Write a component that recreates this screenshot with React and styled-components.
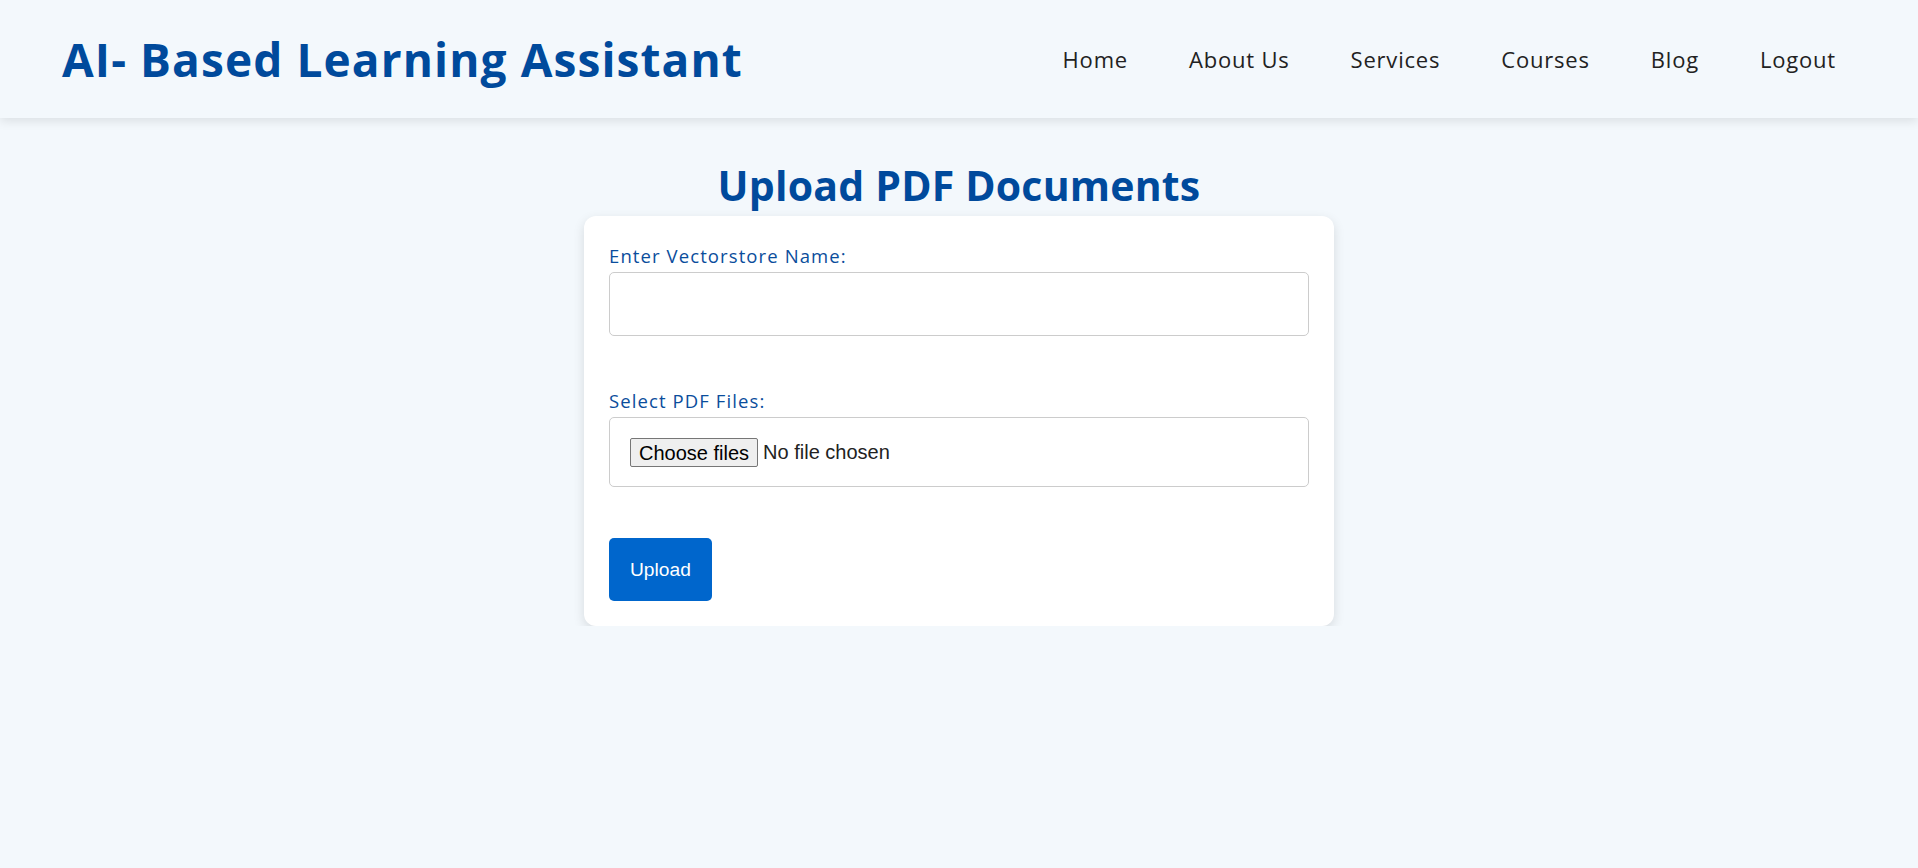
import React, { useState } from 'react'
import styled, { createGlobalStyle } from 'styled-components'

const GlobalStyle = createGlobalStyle`
  * {
    box-sizing: border-box;
  }
  body {
    margin: 0;
    background: #f3f8fc;
    font-family: 'Open Sans', 'Noto Sans', sans-serif;
  }
`

const Header = styled.header`
  height: 118px;
  display: flex;
  align-items: center;
  justify-content: space-between;
  padding: 0 82px 0 62px;
  background: #f3f8fc;
  box-shadow: 0 3px 10px rgba(0, 0, 0, 0.1);
`

const Logo = styled.h1`
  margin: 0;
  font-size: 46px;
  font-weight: 700;
  color: #004a9c;
  letter-spacing: 1.1px;
`

const Nav = styled.nav`
  display: flex;
  gap: 61px;
`

const NavLink = styled.a`
  font-size: 22px;
  font-weight: 500;
  letter-spacing: 0.8px;
  color: #222;
  text-decoration: none;
  cursor: pointer;
`

const Main = styled.main`
  display: flex;
  flex-direction: column;
  align-items: center;
  padding-top: 43px;
`

const Title = styled.h2`
  margin: 0 0 6px;
  font-size: 41px;
  line-height: 1.2;
  font-weight: 700;
  color: #004a9c;
  letter-spacing: 0.2px;
`

const Card = styled.form`
  width: 750px;
  padding: 25px;
  background: #fff;
  border-radius: 12px;
  box-shadow: 0 4px 12px rgba(0, 0, 0, 0.12);
`

const Label = styled.label`
  display: block;
  margin: ${(props) => props.$top || 3}px 0 4px;
  font-size: 18.5px;
  line-height: 24px;
  letter-spacing: 1.1px;
  color: #0a4d9c;
`

const TextInput = styled.input`
  display: block;
  width: 100%;
  height: 64px;
  padding: 20px;
  border: 1px solid #ccc;
  border-radius: 5px;
  font-family: 'Liberation Sans', Arial, sans-serif;
  font-size: 19.2px;
  outline: none;
`

const FileBox = styled.label`
  display: flex;
  align-items: center;
  gap: 5px;
  height: 70px;
  padding: 0 20px;
  border: 1px solid #ccc;
  border-radius: 5px;
  background: #fff;
  font-family: 'Liberation Sans', Arial, sans-serif;
  font-size: 20px;
  color: #222;
  cursor: pointer;

  input {
    display: none;
  }
`

const ChooseButton = styled.span`
  display: inline-block;
  height: 29px;
  padding: 3px 8px 0;
  border: 1px solid #767676;
  border-radius: 2px;
  background: #efefef;
  color: #000;
  line-height: 22px;
`

const Button = styled.button`
  display: block;
  margin-top: 51px;
  padding: 0 21px;
  height: 63px;
  border: none;
  border-radius: 5px;
  background: #0066cc;
  color: #fff;
  font-family: 'Liberation Sans', Arial, sans-serif;
  font-size: 19.2px;
  cursor: pointer;
`

const links = ['Home', 'About Us', 'Services', 'Courses', 'Blog', 'Logout']

export default function App() {
  const [files, setFiles] = useState([])

  const status =
    files.length === 0
      ? 'No file chosen'
      : files.length === 1
        ? files[0].name
        : `${files.length} files`

  return (
    <>
      <GlobalStyle />
      <Header>
        <Logo>AI- Based Learning Assistant</Logo>
        <Nav>
          {links.map((l) => (
            <NavLink key={l}>{l}</NavLink>
          ))}
        </Nav>
      </Header>
      <Main>
        <Title>Upload PDF Documents</Title>
        <Card onSubmit={(e) => e.preventDefault()}>
          <Label htmlFor="vs">Enter Vectorstore Name:</Label>
          <TextInput id="vs" type="text" />
          <Label htmlFor="files" $top={53}>
            Select PDF Files:
          </Label>
          <FileBox>
            <input
              id="files"
              type="file"
              multiple
              accept="application/pdf"
              onChange={(e) => setFiles(Array.from(e.target.files))}
            />
            <ChooseButton>Choose files</ChooseButton>
            <span>{status}</span>
          </FileBox>
          <Button type="submit">Upload</Button>
        </Card>
      </Main>
    </>
  )
}
